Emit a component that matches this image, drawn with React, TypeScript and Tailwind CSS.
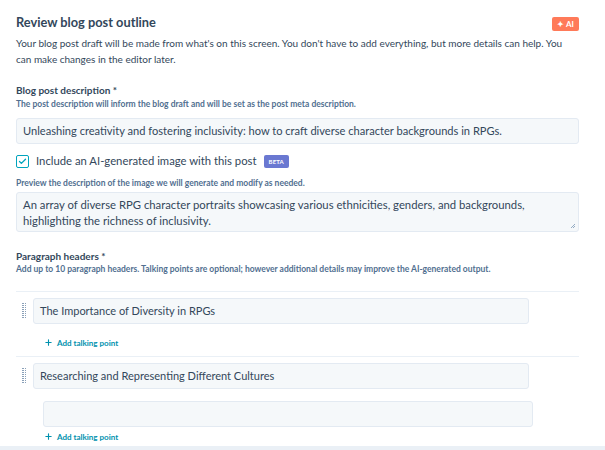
import { Check, Plus } from 'lucide-react';

const font = { fontFamily: '"Lato", "Open Sans", sans-serif' };

function DragHandle() {
  return (
    <div className="grid grid-cols-2 gap-x-[1px] gap-y-[1px] w-[4px] shrink-0">
      {Array.from({ length: 16 }).map((_, i) => (
        <span key={i} className="w-[1.5px] h-[1px] bg-[#8aa0b8]" />
      ))}
    </div>
  );
}

function AddTalkingPoint() {
  return (
    <button type="button" className="flex items-center gap-1 text-[8px] font-bold text-[#0091ae] ml-[28px]">
      <Plus className="w-[9px] h-[9px]" strokeWidth={3} />
      Add talking point
    </button>
  );
}

function HeaderRow({ title, children }: { title: string; children?: React.ReactNode }) {
  return (
    <div className="border-t border-[#eaf0f6] pt-[6px]">
      <div className="flex items-center gap-[7px] pl-[6px]">
        <DragHandle />
        <div className="w-[496px] h-[26px] flex items-center px-[6px] bg-[#f5f8fa] border border-[#e3eaf2] rounded-[3px] text-[11px] text-[#33475b]">
          {title}
        </div>
      </div>
      {children}
    </div>
  );
}

export default function App() {
  return (
    <div className="w-[605px] h-[450px] bg-white overflow-hidden flex flex-col" style={font}>
      <div className="flex-1 pl-[16px] pr-[26px]">
        <div className="flex items-center justify-between pt-[13px]">
          <h1 className="text-[12.8px] font-bold text-[#33475b] leading-[18px]">Review blog post outline</h1>
          <span className="bg-[#ff7a59] text-white text-[8px] font-bold px-[5px] py-[1px] rounded-[2px] flex items-center gap-[2px] mt-[3px]">
            ✦ AI
          </span>
        </div>
        <p className="mt-[4px] text-[10px] leading-[16px] text-[#33475b]">
          Your blog post draft will be made from what's on this screen. You don't have to add everything, but more details can help. You can make changes in the editor later.
        </p>

        <div className="mt-[16px] text-[10px] font-bold text-[#33475b] leading-[14px]">Blog post description *</div>
        <div className="text-[8.5px] font-bold text-[#516f90] leading-[12px] mt-[1px]">
          The post description will inform the blog draft and will be set as the post meta description.
        </div>
        <div className="mt-[8px] h-[26px] flex items-center px-[6px] bg-[#f5f8fa] border border-[#e3eaf2] rounded-[3px] text-[11.1px] text-[#33475b]">
          Unleashing creativity and fostering inclusivity: how to craft diverse character backgrounds in RPGs.
        </div>

        <div className="mt-[9px] flex items-center gap-[7px]">
          <span className="w-[13px] h-[13px] border-[1.5px] border-[#00a4bd] rounded-[2px] flex items-center justify-center bg-white">
            <Check className="w-[9px] h-[9px] text-[#00a4bd]" strokeWidth={3.5} />
          </span>
          <span className="text-[11.3px] text-[#33475b]">Include an AI-generated image with this post</span>
          <span className="bg-[#6a78d1] text-white text-[6px] font-bold px-[5px] py-[2px] rounded-[2px] tracking-wide">BETA</span>
        </div>
        <div className="mt-[7px] text-[8.5px] font-bold text-[#516f90] leading-[12px]">
          Preview the description of the image we will generate and modify as needed.
        </div>
        <div className="relative mt-[3px] h-[40px] pl-[6px] pr-[20px] py-[4px] bg-[#f5f8fa] border border-[#e3eaf2] rounded-[3px] text-[11.3px] leading-[16px] text-[#33475b]">
          An array of diverse RPG character portraits showcasing various ethnicities, genders, and backgrounds, highlighting the richness of inclusivity.
          <svg className="absolute right-[2px] bottom-[2px]" width="6" height="6" viewBox="0 0 6 6">
            <path d="M1 5L5 1M3 5L5 3" stroke="#7c98b6" strokeWidth="0.8" />
          </svg>
        </div>

        <div className="mt-[17px] text-[10px] font-bold text-[#33475b] leading-[14px]">Paragraph headers *</div>
        <div className="text-[8.5px] font-bold text-[#516f90] leading-[12px]">
          Add up to 10 paragraph headers. Talking points are optional; however additional details may improve the AI-generated output.
        </div>

        <div className="mt-[16px]">
          <HeaderRow title="The Importance of Diversity in RPGs">
            <div className="mt-[13px] pb-[7px]">
              <AddTalkingPoint />
            </div>
          </HeaderRow>
          <HeaderRow title="Researching and Representing Different Cultures">
            <div className="mt-[12px] ml-[27px] w-[490px] h-[26px] bg-[#f5f8fa] border border-[#e3eaf2] rounded-[3px]" />
            <div className="mt-[4px]">
              <AddTalkingPoint />
            </div>
          </HeaderRow>
        </div>
      </div>
      <div className="h-[4px] bg-[#eaf0f6]" />
    </div>
  );
}
